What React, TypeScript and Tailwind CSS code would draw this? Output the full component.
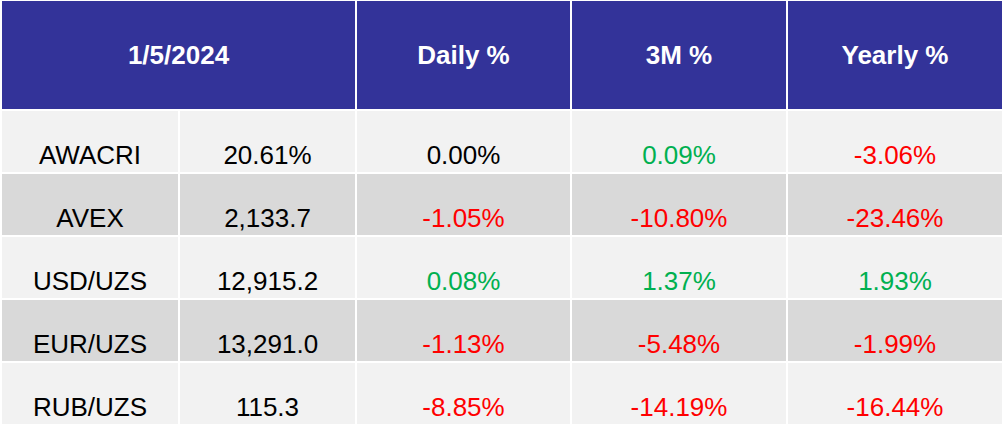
const rows = [
  { name: "AWACRI", value: "20.61%", daily: "0.00%", m3: "0.09%", yearly: "-3.06%" },
  { name: "AVEX", value: "2,133.7", daily: "-1.05%", m3: "-10.80%", yearly: "-23.46%" },
  { name: "USD/UZS", value: "12,915.2", daily: "0.08%", m3: "1.37%", yearly: "1.93%" },
  { name: "EUR/UZS", value: "13,291.0", daily: "-1.13%", m3: "-5.48%", yearly: "-1.99%" },
  { name: "RUB/UZS", value: "115.3", daily: "-8.85%", m3: "-14.19%", yearly: "-16.44%" },
];

// zero stays black, positive green, negative red
const tone = (v: string) => {
  const n = parseFloat(v);
  if (n > 0) return "text-[#00b050]";
  if (n < 0) return "text-[#ff0000]";
  return "text-black";
};

const Cell = ({ children, bg, className = "" }: { children: string; bg: string; className?: string }) => (
  <div className={`h-[61px] flex items-end justify-center pb-[2px] ${bg} ${className}`}>{children}</div>
);

export default function App() {
  return (
    <div className="w-[1003px] h-[424px] bg-white pt-[1px] pl-[2px] pr-[1px] overflow-hidden font-['Liberation_Sans',Arial,sans-serif] text-[26px] leading-[30px]">
      <div className="grid grid-cols-[176px_175px_213px_214px_214px] gap-[2px]">
        <div className="col-span-2 h-[108px] bg-[#333399] text-white font-bold flex items-center justify-center">1/5/2024</div>
        <div className="h-[108px] bg-[#333399] text-white font-bold flex items-center justify-center">Daily %</div>
        <div className="h-[108px] bg-[#333399] text-white font-bold flex items-center justify-center">3M %</div>
        <div className="h-[108px] bg-[#333399] text-white font-bold flex items-center justify-center">Yearly %</div>

        {rows.map((r, i) => {
          const bg = i % 2 === 0 ? "bg-[#f2f2f2]" : "bg-[#d9d9d9]";
          return [
            <Cell key={r.name + "n"} bg={bg} className="text-black">{r.name}</Cell>,
            <Cell key={r.name + "v"} bg={bg} className="text-black">{r.value}</Cell>,
            <Cell key={r.name + "d"} bg={bg} className={tone(r.daily)}>{r.daily}</Cell>,
            <Cell key={r.name + "m"} bg={bg} className={tone(r.m3)}>{r.m3}</Cell>,
            <Cell key={r.name + "y"} bg={bg} className={tone(r.yearly)}>{r.yearly}</Cell>,
          ];
        })}
      </div>
    </div>
  );
}
